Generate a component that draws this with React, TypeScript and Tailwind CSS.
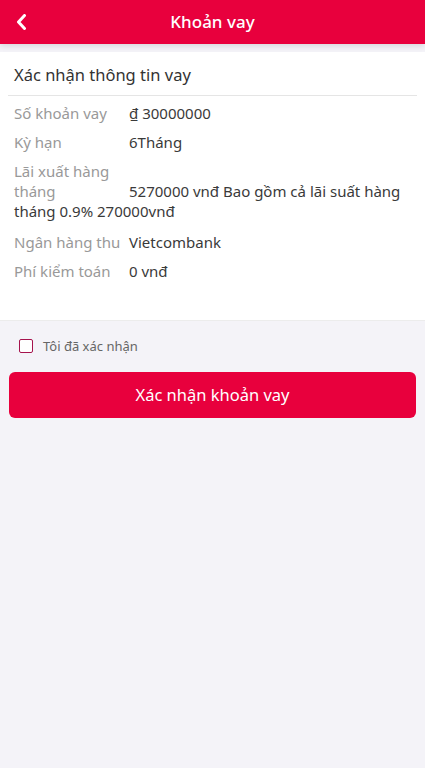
const rows: { label: string; value: string }[] = [
  { label: "Số khoản vay", value: "₫ 30000000" },
  { label: "Kỳ hạn", value: "6Tháng" },
  {
    label: "Lãi xuất hàng tháng",
    value: "5270000 vnđ Bao gồm cả lãi suất hàng tháng 0.9% 270000vnđ",
  },
  { label: "Ngân hàng thu", value: "Vietcombank" },
  { label: "Phí kiểm toán", value: "0 vnđ" },
];

export default function App() {
  return (
    <div
      className="min-h-[768px] bg-[#f4f3f8]"
      style={{ fontFamily: '"Noto Sans", "Liberation Sans", sans-serif' }}
    >
      {/* Header */}
      <header className="relative flex h-11 items-center justify-center bg-[#e8003d] shadow-[0_2px_6px_rgba(0,0,0,0.12)]">
        <button className="absolute left-4 top-1/2 -translate-y-1/2">
          <svg width="11" height="16" viewBox="0 0 11 16" fill="none">
            <polyline
              points="8.5,1.5 2.5,8 8.5,14.5"
              stroke="white"
              strokeWidth="3"
              strokeLinecap="round"
              strokeLinejoin="round"
            />
          </svg>
        </button>
        <h1 className="text-[17px] font-medium text-white">Khoản vay</h1>
      </header>

      {/* Info card */}
      <section className="mt-2 border-b border-[#ececec] bg-white px-2 pb-[39px]">
        <div className="border-b border-[#e5e5e5] pl-[6px] pr-1.5 pt-[11px] pb-2 text-[16.5px] leading-6 text-[#333]">
          Xác nhận thông tin vay
        </div>
        <div className="px-1.5">
          {rows.map((row, i) => (
            <div
              key={i}
              className={`text-[15px] leading-5 text-[#3a3a3a] ${i === 0 ? "pt-[7px]" : "pt-[9px]"} ${i === 2 ? "pb-0.5" : ""}`}
            >
              <span className="inline-block w-[115px] text-[#999]">{row.label}</span>
              {row.value}
            </div>
          ))}
        </div>
      </section>

      {/* Confirm */}
      <label className="flex items-center gap-2.5 px-[19px] pt-[15px] text-[13px] leading-5 text-[#666]">
        <span className="h-[14px] w-[14px] rounded-[2px] border border-[#a5134d] bg-white" />
        Tôi đã xác nhận
      </label>

      <div className="px-[9px] pt-[16px]">
        <button className="h-[46px] w-full rounded-[6px] bg-[#e8003d] text-[16.5px] text-white">
          Xác nhận khoản vay
        </button>
      </div>
    </div>
  );
}
